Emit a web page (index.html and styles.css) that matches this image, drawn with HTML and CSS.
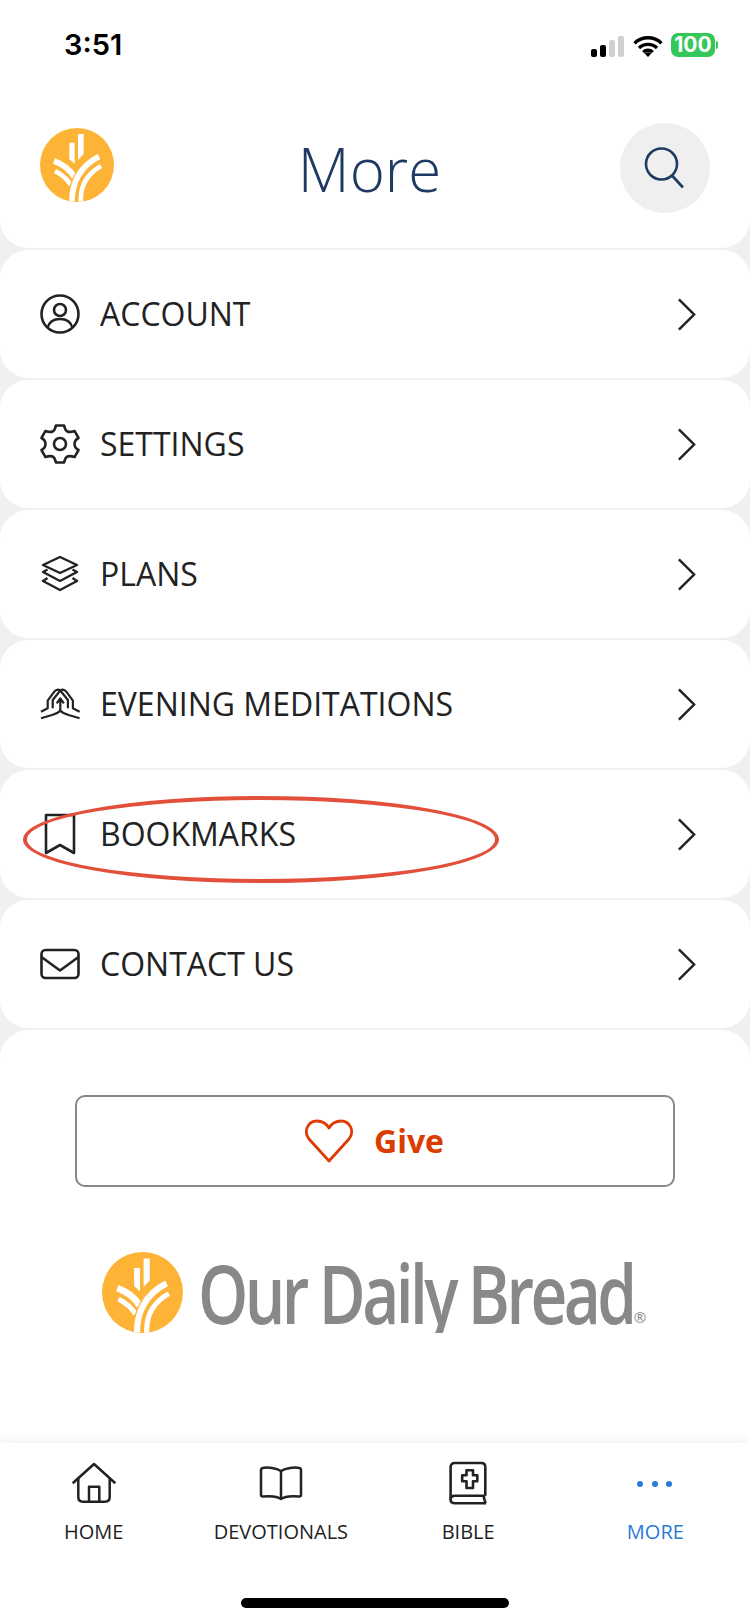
FILE: index.html
```html
<!DOCTYPE html>
<html lang="en">
<head>
<meta charset="utf-8">
<title>More</title>
<link rel="stylesheet" href="styles.css">
</head>
<body>
<svg class="defs" width="0" height="0" aria-hidden="true">
  <defs>
    <clipPath id="logo-clip"><circle cx="140" cy="135" r="111"/></clipPath>
    <symbol id="wheat" viewBox="29 24 222 222">
      <circle cx="140" cy="135" r="111" fill="#fdb335"/>
      <g clip-path="url(#logo-clip)" fill="none" stroke="#fff">
        <polygon points="117,68 133,68 133,132 117,117" fill="#fff" stroke="none"/>
        <polygon points="143,42 160,42 160,102 143,120" fill="#fff" stroke="none"/>
        <path d="M71 123C98 133 120 150 133 172" stroke-width="18"/>
        <path d="M74 153C95 164 110 176 121 194" stroke-width="14"/>
        <path d="M125 250C123 195 145 140 206 110" stroke="#fdb335" stroke-width="24"/>
        <path d="M125 250C123 195 145 140 206 110" stroke-width="17"/>
        <path d="M152 250C148 205 165 165 212 138" stroke-width="14"/>
      </g>
    </symbol>
    <symbol id="chevron" viewBox="0 0 20 36">
      <path d="M2 2l16 16L2 34" fill="none" stroke="#222" stroke-width="2.600"/>
    </symbol>
  </defs>
</svg>

<main class="screen">
  <header class="top-card">
    <div class="status">
      <span class="time">3:51</span>
      <div class="status-icons">
        <div class="signal">
          <i class="bar bar-1"></i><i class="bar bar-2"></i><i class="bar bar-3"></i><i class="bar bar-4"></i>
        </div>
        <svg class="wifi" viewBox="0 0 30 22">
          <path d="M1.500 8.200a19.500 19.500 0 0 1 27 0M6 13a13 13 0 0 1 18 0M10.300 17.200a6.600 6.600 0 0 1 9.400 0" fill="none" stroke="#000" stroke-width="3.400"/>
          <path d="M15 22l-3.200-3.300a4.500 4.500 0 0 1 6.400 0z" fill="#000"/>
        </svg>
        <div class="battery"><span class="battery-level">100</span><i class="battery-nub"></i></div>
      </div>
    </div>
    <div class="title-row">
      <svg class="logo-small"><use href="#wheat"/></svg>
      <h1 class="title">More</h1>
      <div class="search">
        <svg class="search-icon" viewBox="0 0 44 44">
          <circle cx="18.500" cy="18" r="15.500" fill="none" stroke="#1e3a64" stroke-width="2.600"/>
          <path d="M29 29.500l11 12" fill="none" stroke="#1e3a64" stroke-width="2.600"/>
        </svg>
      </div>
    </div>
  </header>

  <nav class="menu">
    <a class="row">
      <svg class="row-icon" viewBox="0 0 44 44" fill="none" stroke="#222" stroke-width="2.600">
        <circle cx="22" cy="22" r="18.500"/>
        <circle cx="22" cy="18" r="6"/>
        <path d="M9.500 36c1.500-6 6.500-9 12.500-9s11 3 12.500 9"/>
      </svg>
      <span class="row-label">ACCOUNT</span>
      <svg class="chevron"><use href="#chevron"/></svg>
    </a>
    <a class="row">
      <svg class="row-icon" viewBox="0 0 44 44" fill="none" stroke="#222" stroke-width="2.600" stroke-linejoin="round">
        <circle cx="22" cy="22" r="6"/>
        <path d="M17.950 3.500L26.050 3.500Q27 8 29.250 9.440Q32 10.500 36.490 8.950L40.550 15.970Q36.500 18 36.500 22Q36.500 26 40.550 28.030L36.490 35.050Q32 33.500 29.250 34.560Q27 36 26.050 40.500L17.950 40.500Q17 36 14.750 34.560Q12 33.500 7.510 35.050L3.450 28.030Q7.500 26 7.500 22Q7.500 18 3.450 15.970L7.510 8.950Q12 10.500 14.750 9.440Q17 8 17.950 3.500z"/>
      </svg>
      <span class="row-label">SETTINGS</span>
      <svg class="chevron"><use href="#chevron"/></svg>
    </a>
    <a class="row">
      <svg class="row-icon" viewBox="0 0 44 44" fill="none" stroke="#222" stroke-width="2.400" stroke-linejoin="round">
        <path d="M22 5l17 8-17 8-17-8z"/>
        <path d="M9.500 17.500L5 20l17 9 17-9-4.500-2.500"/>
        <path d="M9.500 26L5 29l17 9 17-9-4.500-3"/>
      </svg>
      <span class="row-label">PLANS</span>
      <svg class="chevron"><use href="#chevron"/></svg>
    </a>
    <a class="row">
      <svg class="row-icon" viewBox="0 0 44 44" fill="none" stroke="#222" stroke-width="2.200" stroke-linejoin="round">
        <path d="M3 36.300L14 33Q20 31 22.300 28.700Q24.600 31 30.600 33L41.600 36.300"/>
        <path d="M3 29.700L9.700 26.300V18.700L16.300 9.700C18 7.500 20 7 22.300 8.500C24.600 7 26.600 7.500 28.300 9.700L34.900 18.700V26.300L41.600 29.700"/>
        <path d="M14.700 26.300V18L22.300 8.500L29.900 18V26.300"/>
        <path d="M18.700 21.300L22.300 16.300L25.900 21.300M22.300 16.300V28.700"/>
      </svg>
      <span class="row-label">EVENING MEDITATIONS</span>
      <svg class="chevron"><use href="#chevron"/></svg>
    </a>
    <a class="row">
      <svg class="row-icon" viewBox="0 0 44 44" fill="none" stroke="#222" stroke-width="2.600" stroke-linejoin="round">
        <path d="M8 3h28v38L22 33 8 41z"/>
      </svg>
      <span class="row-label">BOOKMARKS</span>
      <svg class="chevron"><use href="#chevron"/></svg>
      <i class="highlight"></i>
    </a>
    <a class="row">
      <svg class="row-icon" viewBox="0 0 44 44" fill="none" stroke="#222" stroke-width="2.600" stroke-linejoin="round">
        <rect x="3.500" y="8" width="37" height="28" rx="4"/>
        <path d="M3.500 15L22 28.500L40.500 15"/>
      </svg>
      <span class="row-label">CONTACT US</span>
      <svg class="chevron"><use href="#chevron"/></svg>
    </a>
  </nav>

  <section class="footer-card">
    <button class="give">
      <svg class="heart" viewBox="0 0 50 44">
        <path d="M25 42L5 20C-1 12 4 2 13 2c5 0 9 2 12 7 3-5 7-7 12-7 9 0 14 10 8 18z" fill="none" stroke="#dd3c00" stroke-width="2.800" stroke-linejoin="round"/>
      </svg>
      <span class="give-label">Give</span>
    </button>
    <div class="brand">
      <svg class="logo-large"><use href="#wheat"/></svg>
      <span class="wordmark">Our Daily Bread</span>
      <span class="registered">®</span>
    </div>
  </section>

  <footer class="tabbar">
    <div class="tabs">
      <a class="tab">
        <svg class="tab-icon" viewBox="0 0 48 48" fill="none" stroke="#222" stroke-width="2.500" stroke-linejoin="round">
          <path d="M2.700 22.300L24 3L45.300 22.300"/>
          <path d="M8.300 17V36c0 3 1.700 4.700 4.700 4.700H35c3 0 4.700-1.700 4.700-4.700V17"/>
          <path d="M19 40.700V25.700H29.300V40.700"/>
        </svg>
        <span class="tab-label">HOME</span>
      </a>
      <a class="tab">
        <svg class="tab-icon" viewBox="0 0 48 48" fill="none" stroke="#222" stroke-width="2.500" stroke-linejoin="round">
          <path d="M24 10C19 7 11 6 5.500 7 4 7.300 4 8 4 9v25c0 1 .8 1.500 2 1.500 7-.7 14-.5 18 2.500 4-3 11-3.200 18-2.500 1.200 0 2-.5 2-1.500V9c0-1 0-1.700-1.500-2-5.500-1-13.500 0-18.500 3z"/>
          <path d="M24 10v27"/>
        </svg>
        <span class="tab-label">DEVOTIONALS</span>
      </a>
      <a class="tab">
        <svg class="tab-icon tab-icon-bible" viewBox="0 0 40 46" fill="none" stroke="#222" stroke-linejoin="round" stroke-width="2.600">
          <path d="M2.600 38.500V6c0-2.500 1.500-4 4-4h26.700c2.500 0 4 1.500 4 4v28.700"/>
          <path d="M37.300 34.700H7c-2.800 0-4.400 1.700-4.400 3.800s1.600 3.800 4.400 3.800H38"/>
          <path d="M35.600 35.500l2 6.800"/>
          <path d="M18.500 9.300h6.500v5h4.300v6H25V27h-6.500v-6.700h-4.300v-6h4.300z"/>
        </svg>
        <span class="tab-label">BIBLE</span>
      </a>
      <a class="tab">
        <svg class="tab-icon" viewBox="0 0 48 48" fill="#2a7bd8">
          <circle cx="9" cy="23" r="3"/><circle cx="24" cy="23" r="3"/><circle cx="38" cy="23" r="3"/>
        </svg>
        <span class="tab-label tab-label-active">MORE</span>
      </a>
    </div>
    <div class="home-indicator"></div>
  </footer>
</main>
</body>
</html>
```

FILE: styles.css
```css
* { box-sizing: border-box; }
html, body { margin: 0; padding: 0; }
body {
  width: 750px;
  height: 1624px;
  overflow: hidden;
  background: #f0f0f0;
  font-family: "Open Sans", sans-serif;
  color: #222;
}
.defs { display: block; height: 0; }
.screen {
  width: 750px;
  height: 1624px;
  display: flex;
  flex-direction: column;
}

/* Top card */
.top-card {
  height: 248px;
  background: #fff;
  border-radius: 0 0 28px 28px;
}
.status {
  height: 88px;
  padding: 33px 35px 0 64px;
  display: flex;
  justify-content: space-between;
  align-items: flex-start;
}
.time {
  font-family: Inter, sans-serif;
  font-weight: 600;
  font-size: 29px;
  line-height: 24px;
  color: #000;
}
.status-icons {
  display: flex;
  align-items: flex-end;
  gap: 8px;
}
.signal {
  display: flex;
  align-items: flex-end;
  gap: 3px;
  margin-right: 1px;
  height: 22px;
}
.bar { display: block; width: 6px; border-radius: 2px; background: #000; }
.bar-1 { height: 8px; }
.bar-2 { height: 12px; }
.bar-3 { height: 17px; background: #d0d0d0; }
.bar-4 { height: 21px; background: #d0d0d0; }
.wifi { display: block; width: 30px; height: 22px; }
.battery {
  position: relative;
  width: 44px;
  height: 24px;
  border-radius: 7px;
  background: #34c759;
  display: flex;
  align-items: center;
  justify-content: center;
}
.battery-level {
  font-family: Inter, sans-serif;
  font-weight: 700;
  font-size: 21px;
  line-height: 24px;
  color: #fff;
}
.battery-nub {
  position: absolute;
  right: -3px;
  top: 8px;
  width: 2px;
  height: 8px;
  border-radius: 0 2px 2px 0;
  background: #34c759;
}
.title-row {
  height: 100px;
  padding: 35px 40px 0 40px;
  display: grid;
  grid-template-columns: 74px 1fr 90px;
  align-items: start;
}
.logo-small { display: block; width: 74px; height: 74px; margin-top: 5px; }
.title {
  margin: 5px 0 0;
  padding-left: 5px;
  font-weight: 300;
  font-size: 60px;
  line-height: 82px;
  text-align: center;
  color: #1e3a64;
}
.search {
  width: 90px;
  height: 90px;
  border-radius: 50%;
  background: #efefef;
  display: flex;
  align-items: center;
  justify-content: center;
}
.search-icon { display: block; width: 44px; height: 44px; }

/* Menu */
.menu {
  margin-top: 2px;
  display: flex;
  flex-direction: column;
  gap: 2px;
}
.row {
  position: relative;
  height: 128px;
  padding: 0 54px 0 38px;
  background: #fff;
  border-radius: 28px;
  display: flex;
  align-items: center;
}
.row-icon { display: block; width: 44px; height: 44px; flex: none; }
.row-label {
  flex: 1;
  margin-left: 18px;
  font-size: 32px;
  line-height: 44px;
  color: #222;
}
.chevron { display: block; width: 19px; height: 35px; flex: none; }
.highlight {
  position: absolute;
  left: 23px;
  top: 26px;
  width: 476px;
  height: 87px;
  border: 4px solid #e2503c;
  border-radius: 50%;
}

/* Footer card */
.footer-card {
  margin-top: 2px;
  flex: 1;
  min-height: 0;
  background: #fff;
  border-radius: 28px 28px 0 0;
  display: flex;
  flex-direction: column;
  align-items: center;
  padding-top: 65px;
}
.give {
  width: 600px;
  height: 92px;
  margin-right: 1px;
  padding: 0 1px 0 0;
  background: #fff;
  border: 2px solid #888;
  border-radius: 10px;
  display: flex;
  align-items: center;
  justify-content: center;
  gap: 20px;
  font-family: inherit;
}
.heart { display: block; width: 50px; height: 44px; }
.give-label {
  font-weight: 700;
  font-size: 32px;
  line-height: 44px;
  color: #dd3c00;
}
.brand {
  margin-top: 65px;
  height: 82px;
  margin-left: -2px;
  display: flex;
  align-items: flex-start;
}
.logo-large { display: block; width: 81px; height: 81px; flex: none; }
.wordmark {
  display: block;
  width: 436px;
  height: 81px;
  margin-left: 15px;
  font-family: "Open Sans", sans-serif;
  font-weight: 600;
  font-size: 82px;
  line-height: 81px;
  letter-spacing: -4.600px;
  color: #888;
  white-space: nowrap;
  transform: scaleX(0.78);
  transform-origin: 0 50%;
  clip-path: inset(0 -200px 0 0);
}
.registered {
  align-self: flex-end;
  font-size: 15px;
  line-height: 22px;
  color: #888;
  margin-bottom: 6px;
}

/* Tab bar */
.tabbar {
  height: 181px;
  background: #fff;
  box-shadow: 0 -3px 10px rgba(0, 0, 0, 0.06);
}
.tabs {
  display: grid;
  grid-template-columns: repeat(4, 1fr);
  padding: 18px 1px 0 0;
}
.tab {
  display: flex;
  flex-direction: column;
  align-items: center;
}
.tab-icon { display: block; width: 48px; height: 48px; }
.tab-icon-bible { width: 40px; height: 46px; margin-bottom: 2px; }
.tab-label {
  margin-top: 9px;
  font-size: 20px;
  line-height: 28px;
  color: #222;
}
.tab-label-active { color: #2a7bd8; }
.home-indicator {
  width: 268px;
  height: 10px;
  margin: 52px auto 0;
  border-radius: 5px;
  background: #000;
}
```
